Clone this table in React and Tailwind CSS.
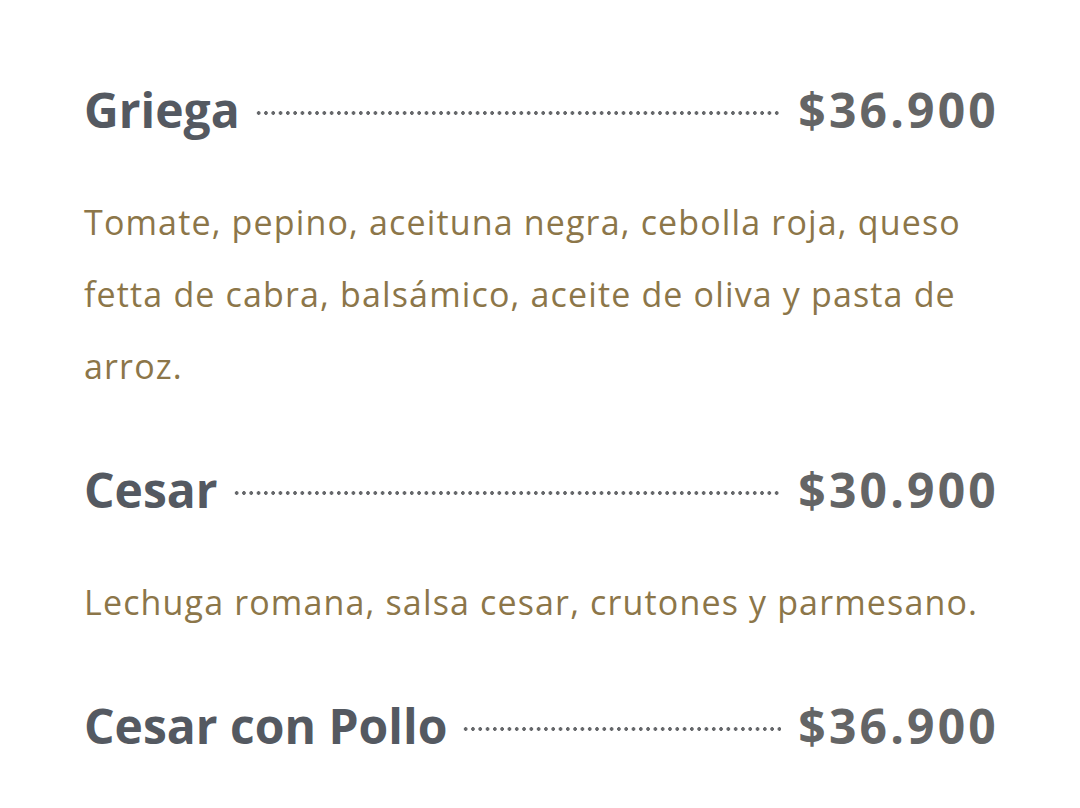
export default function App() {
  const items = [
    {
      name: "Griega",
      price: "$36.900",
      desc: "Tomate, pepino, aceituna negra, cebolla roja, queso fetta de cabra, balsámico, aceite de oliva y pasta de arroz.",
    },
    {
      name: "Cesar",
      price: "$30.900",
      desc: "Lechuga romana, salsa cesar, crutones y parmesano.",
    },
    { name: "Cesar con Pollo", price: "$36.900", desc: null },
  ];
  return (
    <div
      className="w-[1080px] h-[808px] bg-white px-[84px] pt-[78px] overflow-hidden"
      style={{ fontFamily: '"Open Sans", "Noto Sans", sans-serif' }}
    >
      {items.map((it) => (
        <div key={it.name} className="mb-[56px]">
          <div className="flex items-end h-[64px]">
            <span className="text-[48px] font-bold text-[#545961] leading-[64px] whitespace-nowrap">
              {it.name}
            </span>
            <span className="flex-1 ml-[15px] mr-[17px] mb-[27px] h-[4px] bg-[radial-gradient(circle,#65676a_1.6px,transparent_2.1px)] bg-[length:7.3px_4px] bg-repeat-x"></span>
            <span className="text-[48px] font-bold text-[#646566] leading-[64px] tracking-[3.2px] mr-[-3px] whitespace-nowrap">
              {it.price}
            </span>
          </div>
          {it.desc && (
            <p className="mt-[44px] text-[34px] leading-[72px] tracking-[1.15px] text-[#8c7649]">
              {it.desc}
            </p>
          )}
        </div>
      ))}
    </div>
  );
}
